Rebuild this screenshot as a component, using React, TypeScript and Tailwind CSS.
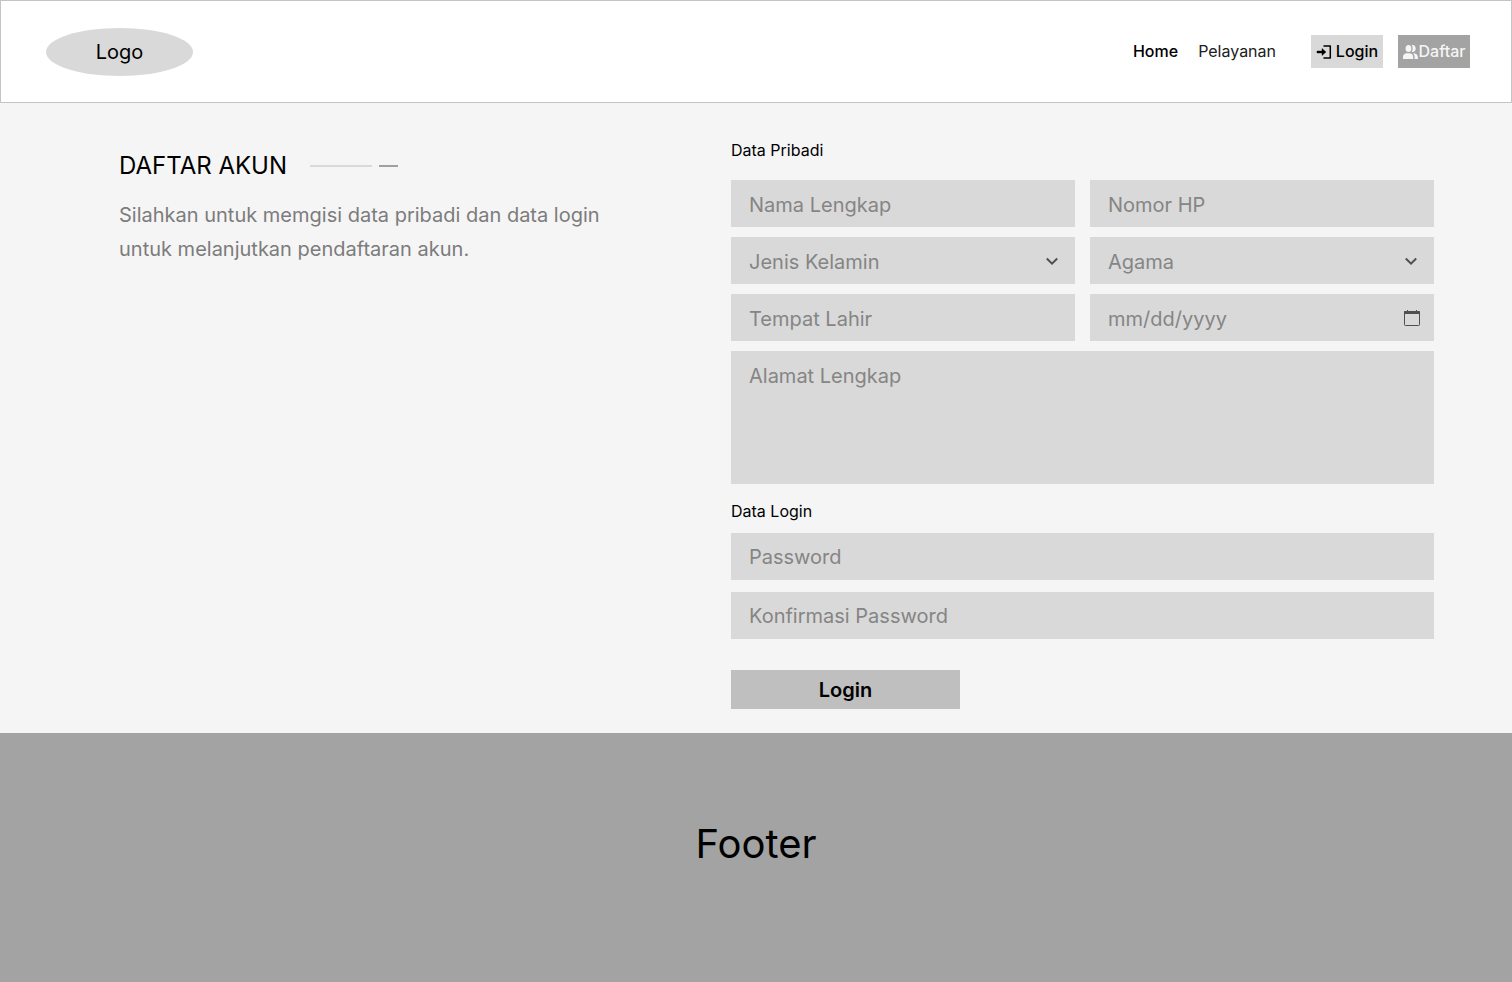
import type { ReactNode } from "react";

const field =
  "block h-[47px] w-full appearance-none rounded-none bg-[#d9d9d9] px-[18px] text-xl text-[#858585] placeholder:text-[#858585]";

function LoginIcon() {
  return (
    <svg className="h-4 w-4 shrink-0" viewBox="0 0 16 16" fill="none" aria-hidden="true">
      <path d="M8 1.900h6.300v12.200H8" stroke="currentColor" strokeWidth="1.500" strokeLinejoin="round" strokeLinecap="round" />
      <path d="M1 7h5V4.500L10 8l-4 3.500V9H1z" fill="currentColor" stroke="currentColor" strokeWidth=".4" strokeLinejoin="round" />
    </svg>
  );
}

function UsersIcon() {
  return (
    <svg className="h-4 w-4 shrink-0" viewBox="0 0 16 16" fill="currentColor" aria-hidden="true">
      <ellipse cx="5.500" cy="4.500" rx="2.900" ry="3.600" />
      <path d="M8.700 1.100c2.400-.8 4 1 4 3.400s-1.600 4.200-4 3.400c1.300-1.800 1.300-5 0-6.800z" />
      <path d="M0 15v-1.900C0 10.800 1.600 9.300 3.900 9.300h2.400c2.300 0 3.900 1.500 3.900 3.800V15z" />
      <path d="M10 9.300c3 0 4.900 1.500 4.900 3.900V15h-3.300v-1.900c0-1.600-.6-2.900-1.600-3.800z" />
    </svg>
  );
}

function SelectField({ label, options }: { label: string; options: string[] }) {
  return (
    <div className="relative">
      <select aria-label={label} defaultValue="" className={`${field} pt-[2px]`}>
        <option value="" disabled>
          {label}
        </option>
        {options.map((option) => (
          <option key={option}>{option}</option>
        ))}
      </select>
      <svg
        className="pointer-events-none absolute top-[18px] right-4 h-3 w-[14px] text-[#505050]"
        viewBox="0 0 14 12"
        fill="none"
        aria-hidden="true"
      >
        <path d="M1.800 3.500 7 8.700l5.200-5.200" stroke="currentColor" strokeWidth="2" />
      </svg>
    </div>
  );
}

function DateField() {
  return (
    <div className="relative">
      <input
        type="date"
        aria-label="Tanggal Lahir"
        className={`${field} pt-[2px] [&::-webkit-calendar-picker-indicator]:opacity-0 [&::-webkit-datetime-edit-day-field]:p-0 [&::-webkit-datetime-edit-month-field]:p-0 [&::-webkit-datetime-edit-year-field]:p-0`}
      />
      <svg
        className="pointer-events-none absolute top-4 right-[14px] h-4 w-4 text-[#505050]"
        viewBox="0 0 16 16"
        fill="none"
        aria-hidden="true"
      >
        <rect x=".5" y="1.500" width="15" height="14" rx=".8" stroke="currentColor" />
        <path d="M0 4V1.800a.8.8 0 0 1 .8-.8H3V0h1v1h8V0h1v1h2.200a.8.8 0 0 1 .8.8V4z" fill="currentColor" />
      </svg>
    </div>
  );
}

function SectionTitle({ children }: { children: ReactNode }) {
  return <h2 className="text-base leading-6 text-black">{children}</h2>;
}

export default function App() {
  return (
    <div className="flex min-h-screen flex-col bg-[#f5f5f5] font-[Inter,sans-serif] text-black">
      <header className="flex items-start justify-between border border-[#c4c4c4] bg-white pt-[27px] pr-[41px] pb-[26px] pl-[45px]">
        <a
          href="#"
          className="flex h-12 w-[147px] items-center justify-center rounded-[50%] bg-[#d9d9d9] text-xl"
        >
          Logo
        </a>
        <nav className="flex items-center pt-[7px] text-base leading-[23px] font-medium">
          <a href="#">Home</a>
          <a href="#" className="ml-5 font-normal text-[#202020]">
            Pelayanan
          </a>
          <a
            href="#"
            className="ml-[35px] flex h-[33px] w-[72px] items-center justify-center gap-1 bg-[#d9d9d9]"
          >
            <LoginIcon />
            Login
          </a>
          <a
            href="#"
            className="ml-[15px] flex h-[33px] w-[72px] items-center justify-center bg-[#a3a3a3] text-[#f5f5f5]"
          >
            <UsersIcon />
            Daftar
          </a>
        </nav>
      </header>

      <main className="grid grid-cols-[612fr_703fr] pt-[35px] pr-[78px] pb-6 pl-[119px]">
        <section className="pt-3">
          <div className="flex items-center">
            <h1 className="text-2xl leading-8">DAFTAR AKUN</h1>
            <span className="ml-[23px] h-[2px] w-[62px] bg-[#d9d9d9]" />
            <span className="ml-[7px] h-[2px] w-[19px] bg-[#a0a0a0]" />
          </div>
          <p className="mt-4 max-w-[500px] text-xl leading-[34px] text-[#7c7c7c]">
            Silahkan untuk memgisi data pribadi dan data login untuk melanjutkan pendaftaran akun.
          </p>
        </section>

        <form onSubmit={(event) => event.preventDefault()}>
          <SectionTitle>Data Pribadi</SectionTitle>
          <div className="mt-[18px] grid grid-cols-2 gap-x-[15px] gap-y-[10px]">
            <input type="text" aria-label="Nama Lengkap" placeholder="Nama Lengkap" className={`${field} pt-[2px]`} />
            <input type="tel" aria-label="Nomor HP" placeholder="Nomor HP" className={`${field} pt-[2px]`} />
            <SelectField label="Jenis Kelamin" options={["Laki-laki", "Perempuan"]} />
            <SelectField
              label="Agama"
              options={["Islam", "Kristen", "Katolik", "Hindu", "Buddha", "Konghucu"]}
            />
            <input type="text" aria-label="Tempat Lahir" placeholder="Tempat Lahir" className={`${field} pt-[2px]`} />
            <DateField />
            <textarea
              aria-label="Alamat Lengkap"
              placeholder="Alamat Lengkap"
              className="col-span-2 block h-[133px] w-full resize-none bg-[#d9d9d9] px-[18px] py-[11px] text-xl text-[#858585] placeholder:text-[#858585]"
            />
          </div>

          <div className="mt-[15px]">
            <SectionTitle>Data Login</SectionTitle>
          </div>
          <div className="mt-[10px] grid gap-3">
            <input type="password" aria-label="Password" placeholder="Password" className={field} />
            <input
              type="password"
              aria-label="Konfirmasi Password"
              placeholder="Konfirmasi Password"
              className={field}
            />
          </div>
          <button type="submit" className="mt-[31px] block h-[39px] w-[229px] bg-[#bfbfbf] text-xl font-semibold">
            Login
          </button>
        </form>
      </main>

      <footer className="flex flex-1 justify-center bg-[#a3a3a3] pt-[87px] pb-24">
        <p className="text-[40px] leading-[48px]">Footer</p>
      </footer>
    </div>
  );
}
